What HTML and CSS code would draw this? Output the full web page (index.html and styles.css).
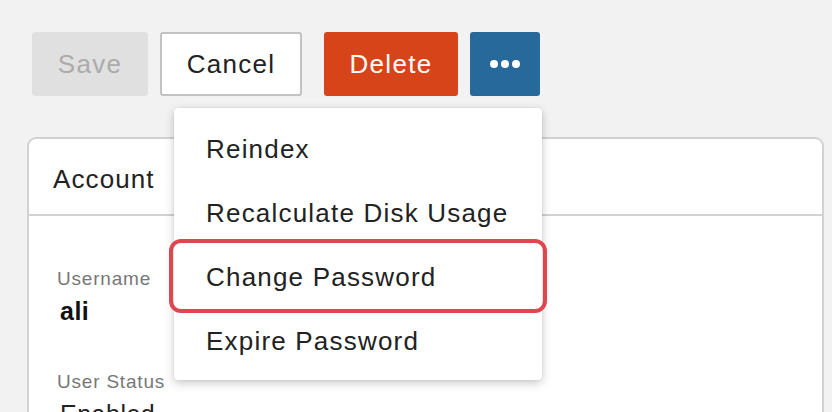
FILE: index.html
```html
<!DOCTYPE html>
<html lang="en">
<head>
<meta charset="utf-8">
<title>User</title>
<link rel="stylesheet" href="styles.css">
</head>
<body>
<div class="page">
  <div class="toolbar">
    <button class="btn btn-save" disabled>Save</button>
    <button class="btn btn-cancel">Cancel</button>
    <button class="btn btn-delete">Delete</button>
    <div class="more-wrap">
      <button class="btn btn-more" aria-label="More actions">
        <svg width="34" height="10" viewBox="0 0 34 10"><circle cx="6" cy="5" r="4" fill="#fff"/><circle cx="17" cy="5" r="4" fill="#fff"/><circle cx="28" cy="5" r="4" fill="#fff"/></svg>
      </button>
    </div>
  </div>

  <div class="card">
    <div class="card-header">Account</div>
    <div class="card-body">
      <div class="field">
        <div class="label">Username</div>
        <div class="value value-bold">ali</div>
      </div>
      <div class="field">
        <div class="label">User Status</div>
        <div class="value">Enabled</div>
      </div>
    </div>
  </div>

  <ul class="menu">
    <li class="menu-item">Reindex</li>
    <li class="menu-item">Recalculate Disk Usage</li>
    <li class="menu-item menu-item-highlight">Change Password</li>
    <li class="menu-item">Expire Password</li>
  </ul>
</div>
</body>
</html>
```

FILE: styles.css
```css
html, body {
  margin: 0;
  padding: 0;
  background: #f2f2f2;
  font-family: "Liberation Sans", Arial, sans-serif;
  color: #222;
  overflow: hidden;
}

.page {
  position: relative;
  width: 832px;
  height: 412px;
  overflow: hidden;
}

.toolbar {
  display: flex;
  align-items: center;
  padding: 32px 0 0 32px;
  height: 64px;
}

.btn {
  box-sizing: border-box;
  height: 64px;
  border: none;
  border-radius: 3px;
  font-family: "Liberation Sans", Arial, sans-serif;
  font-size: 26px;
  letter-spacing: 1.3px;
  padding: 0;
  display: flex;
  align-items: center;
  justify-content: center;
}

.btn-save {
  width: 116px;
  background: #e0e0e0;
  color: #ababab;
}

.btn-cancel {
  width: 142px;
  margin-left: 12px;
  background: #fff;
  border: 2px solid #c2c2c2;
  color: #222;
}

.btn-delete {
  width: 134px;
  margin-left: 22px;
  background: #d8441a;
  color: #fff;
}

.more-wrap {
  margin-left: 12px;
}

.btn-more {
  width: 70px;
  background: #27699b;
}

.card {
  box-sizing: border-box;
  margin: 41px 8px 0 27px;
  background: #fff;
  border: 2px solid #d2d2d2;
  border-radius: 9px;
  height: 320px;
}

.card-header {
  padding: 6px 0 0 24px;
  line-height: 69px;
  font-size: 26px;
  letter-spacing: 1.1px;
  color: #222;
  border-bottom: 2px solid #d2d2d2;
}

.card-body {
  padding: 52px 0 0 28px;
}

.field + .field {
  margin-top: 45px;
}

.label {
  font-size: 19px;
  line-height: 22px;
  letter-spacing: 0.8px;
  color: #777;
}

.value {
  margin: 6px 0 0 3px;
  font-size: 25px;
  line-height: 30px;
  letter-spacing: 0.5px;
  color: #222;
}

.value-bold {
  font-weight: bold;
  color: #111;
}

.menu {
  position: absolute;
  left: 174px;
  top: 108px;
  width: 368px;
  margin: 0;
  padding: 8px 0;
  list-style: none;
  background: #fff;
  border-radius: 4px;
  box-shadow: 0 3px 10px rgba(0, 0, 0, 0.22), 0 0 2px rgba(0, 0, 0, 0.08);
}

.menu-item {
  position: relative;
  height: 64px;
  line-height: 66px;
  padding-left: 32px;
  font-size: 26px;
  letter-spacing: 1.2px;
  color: #222;
  white-space: nowrap;
}

.menu-item-highlight::after {
  content: "";
  position: absolute;
  left: -5px;
  right: -5px;
  top: -5px;
  bottom: -5px;
  border: 4.5px solid #e0464f;
  border-radius: 12px;
}
```
